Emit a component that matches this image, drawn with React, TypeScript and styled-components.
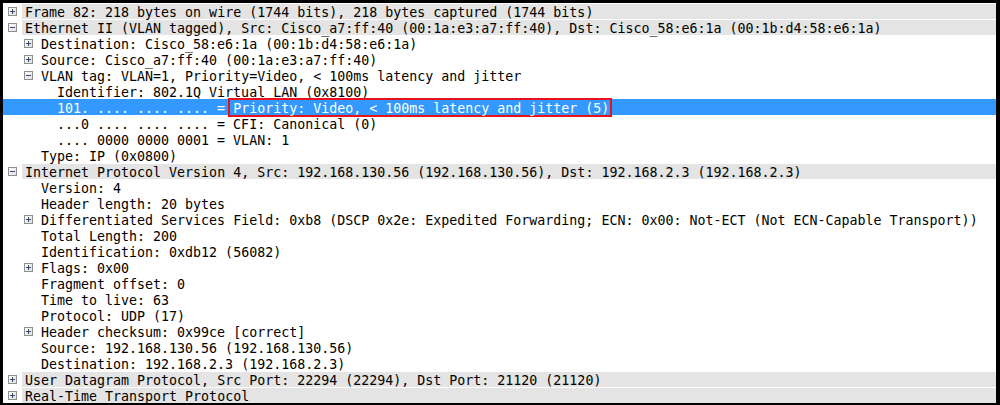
import styled, { createGlobalStyle } from 'styled-components';

type Node = {
	text: string;
	level: number;
	expander?: 'plus' | 'minus';
	selected?: boolean;
	// Highlighted part of the selected row (boxed in red)
	marked?: string;
};

const rows: Node[] = [
	{ level: 0, expander: 'plus', text: 'Frame 82: 218 bytes on wire (1744 bits), 218 bytes captured (1744 bits)' },
	{ level: 0, expander: 'minus', text: 'Ethernet II (VLAN tagged), Src: Cisco_a7:ff:40 (00:1a:e3:a7:ff:40), Dst: Cisco_58:e6:1a (00:1b:d4:58:e6:1a)' },
	{ level: 1, expander: 'plus', text: 'Destination: Cisco_58:e6:1a (00:1b:d4:58:e6:1a)' },
	{ level: 1, expander: 'plus', text: 'Source: Cisco_a7:ff:40 (00:1a:e3:a7:ff:40)' },
	{ level: 1, expander: 'minus', text: 'VLAN tag: VLAN=1, Priority=Video, < 100ms latency and jitter' },
	{ level: 2, text: 'Identifier: 802.1Q Virtual LAN (0x8100)' },
	{ level: 2, selected: true, text: '101. .... .... .... = ', marked: 'Priority: Video, < 100ms latency and jitter (5)' },
	{ level: 2, text: '...0 .... .... .... = CFI: Canonical (0)' },
	{ level: 2, text: '.... 0000 0000 0001 = VLAN: 1' },
	{ level: 1, text: 'Type: IP (0x0800)' },
	{ level: 0, expander: 'minus', text: 'Internet Protocol Version 4, Src: 192.168.130.56 (192.168.130.56), Dst: 192.168.2.3 (192.168.2.3)' },
	{ level: 1, text: 'Version: 4' },
	{ level: 1, text: 'Header length: 20 bytes' },
	{ level: 1, expander: 'plus', text: 'Differentiated Services Field: 0xb8 (DSCP 0x2e: Expedited Forwarding; ECN: 0x00: Not-ECT (Not ECN-Capable Transport))' },
	{ level: 1, text: 'Total Length: 200' },
	{ level: 1, text: 'Identification: 0xdb12 (56082)' },
	{ level: 1, expander: 'plus', text: 'Flags: 0x00' },
	{ level: 1, text: 'Fragment offset: 0' },
	{ level: 1, text: 'Time to live: 63' },
	{ level: 1, text: 'Protocol: UDP (17)' },
	{ level: 1, expander: 'plus', text: 'Header checksum: 0x99ce [correct]' },
	{ level: 1, text: 'Source: 192.168.130.56 (192.168.130.56)' },
	{ level: 1, text: 'Destination: 192.168.2.3 (192.168.2.3)' },
	{ level: 0, expander: 'plus', text: 'User Datagram Protocol, Src Port: 22294 (22294), Dst Port: 21120 (21120)' },
	{ level: 0, expander: 'plus', text: 'Real-Time Transport Protocol' },
];

const Expander = ({ kind }: { kind: 'plus' | 'minus' }) => (
	<svg width='9' height='9' viewBox='0 0 9 9'>
		<defs>
			<linearGradient id='exg' x1='0' y1='0' x2='1' y2='1'>
				<stop offset='0' stopColor='#ffffff' />
				<stop offset='1' stopColor='#dcdcdc' />
			</linearGradient>
		</defs>
		<rect x='0.5' y='0.5' width='8' height='8' fill='url(#exg)' stroke='#8e8f8f' />
		<rect x='2' y='4' width='5' height='1' fill='#3b4a6b' />
		{kind === 'plus' && <rect x='4' y='2' width='1' height='5' fill='#3b4a6b' />}
	</svg>
);

const App = () => (
	<>
		<GlobalStyle />
		<Frame>
			{rows.map((r, i) => (
				<Row key={i} $level={r.level} $selected={!!r.selected}>
					<Slot>{r.expander && <Expander kind={r.expander} />}</Slot>
					<Label $top={r.level === 0} $selected={!!r.selected}>
						{r.text}
						{r.marked && <Marked>{r.marked}</Marked>}
					</Label>
				</Row>
			))}
		</Frame>
	</>
);

export default App;

const GlobalStyle = createGlobalStyle`
	html, body {
		margin: 0;
		padding: 0;
		background: #fff;
	}
`;

const Frame = styled.div`
	box-sizing: border-box;
	width: 1000px;
	height: 405px;
	overflow: hidden;
	background: #fff;
	border-style: solid;
	border-color: #000;
	border-width: 3px 4px 2px 3px;
	font-family: 'DejaVu Sans Mono', 'Liberation Mono', monospace;
	font-size: 13.3px;
	color: #000;
`;

const Row = styled.div<{ $level: number; $selected: boolean }>`
	display: flex;
	height: 16px;
	padding-left: ${(p) => p.$level * 16}px;
	background: ${(p) => (p.$selected ? '#3399ff' : 'transparent')};
	white-space: pre;
`;

const Slot = styled.div`
	flex: none;
	width: 19px;
	display: flex;
	align-items: center;
	padding-left: 5px;
	box-sizing: border-box;
	padding-top: 1px;
`;

const Label = styled.div<{ $top: boolean; $selected: boolean }>`
	flex: 1;
	height: 15px;
	margin-top: 1px;
	padding-left: 3px;
	line-height: 17px;
	background: ${(p) => (p.$top ? '#e4e4e4' : 'transparent')};
	color: ${(p) => (p.$selected ? '#fff' : '#000')};
`;

const Marked = styled.span`
	display: inline-block;
	margin-left: -5px;
	margin-top: -2px;
	padding: 0 1px 0 3px;
	height: 15px;
	line-height: 17px;
	border: 2px solid #e8121c;
	vertical-align: top;
`;
